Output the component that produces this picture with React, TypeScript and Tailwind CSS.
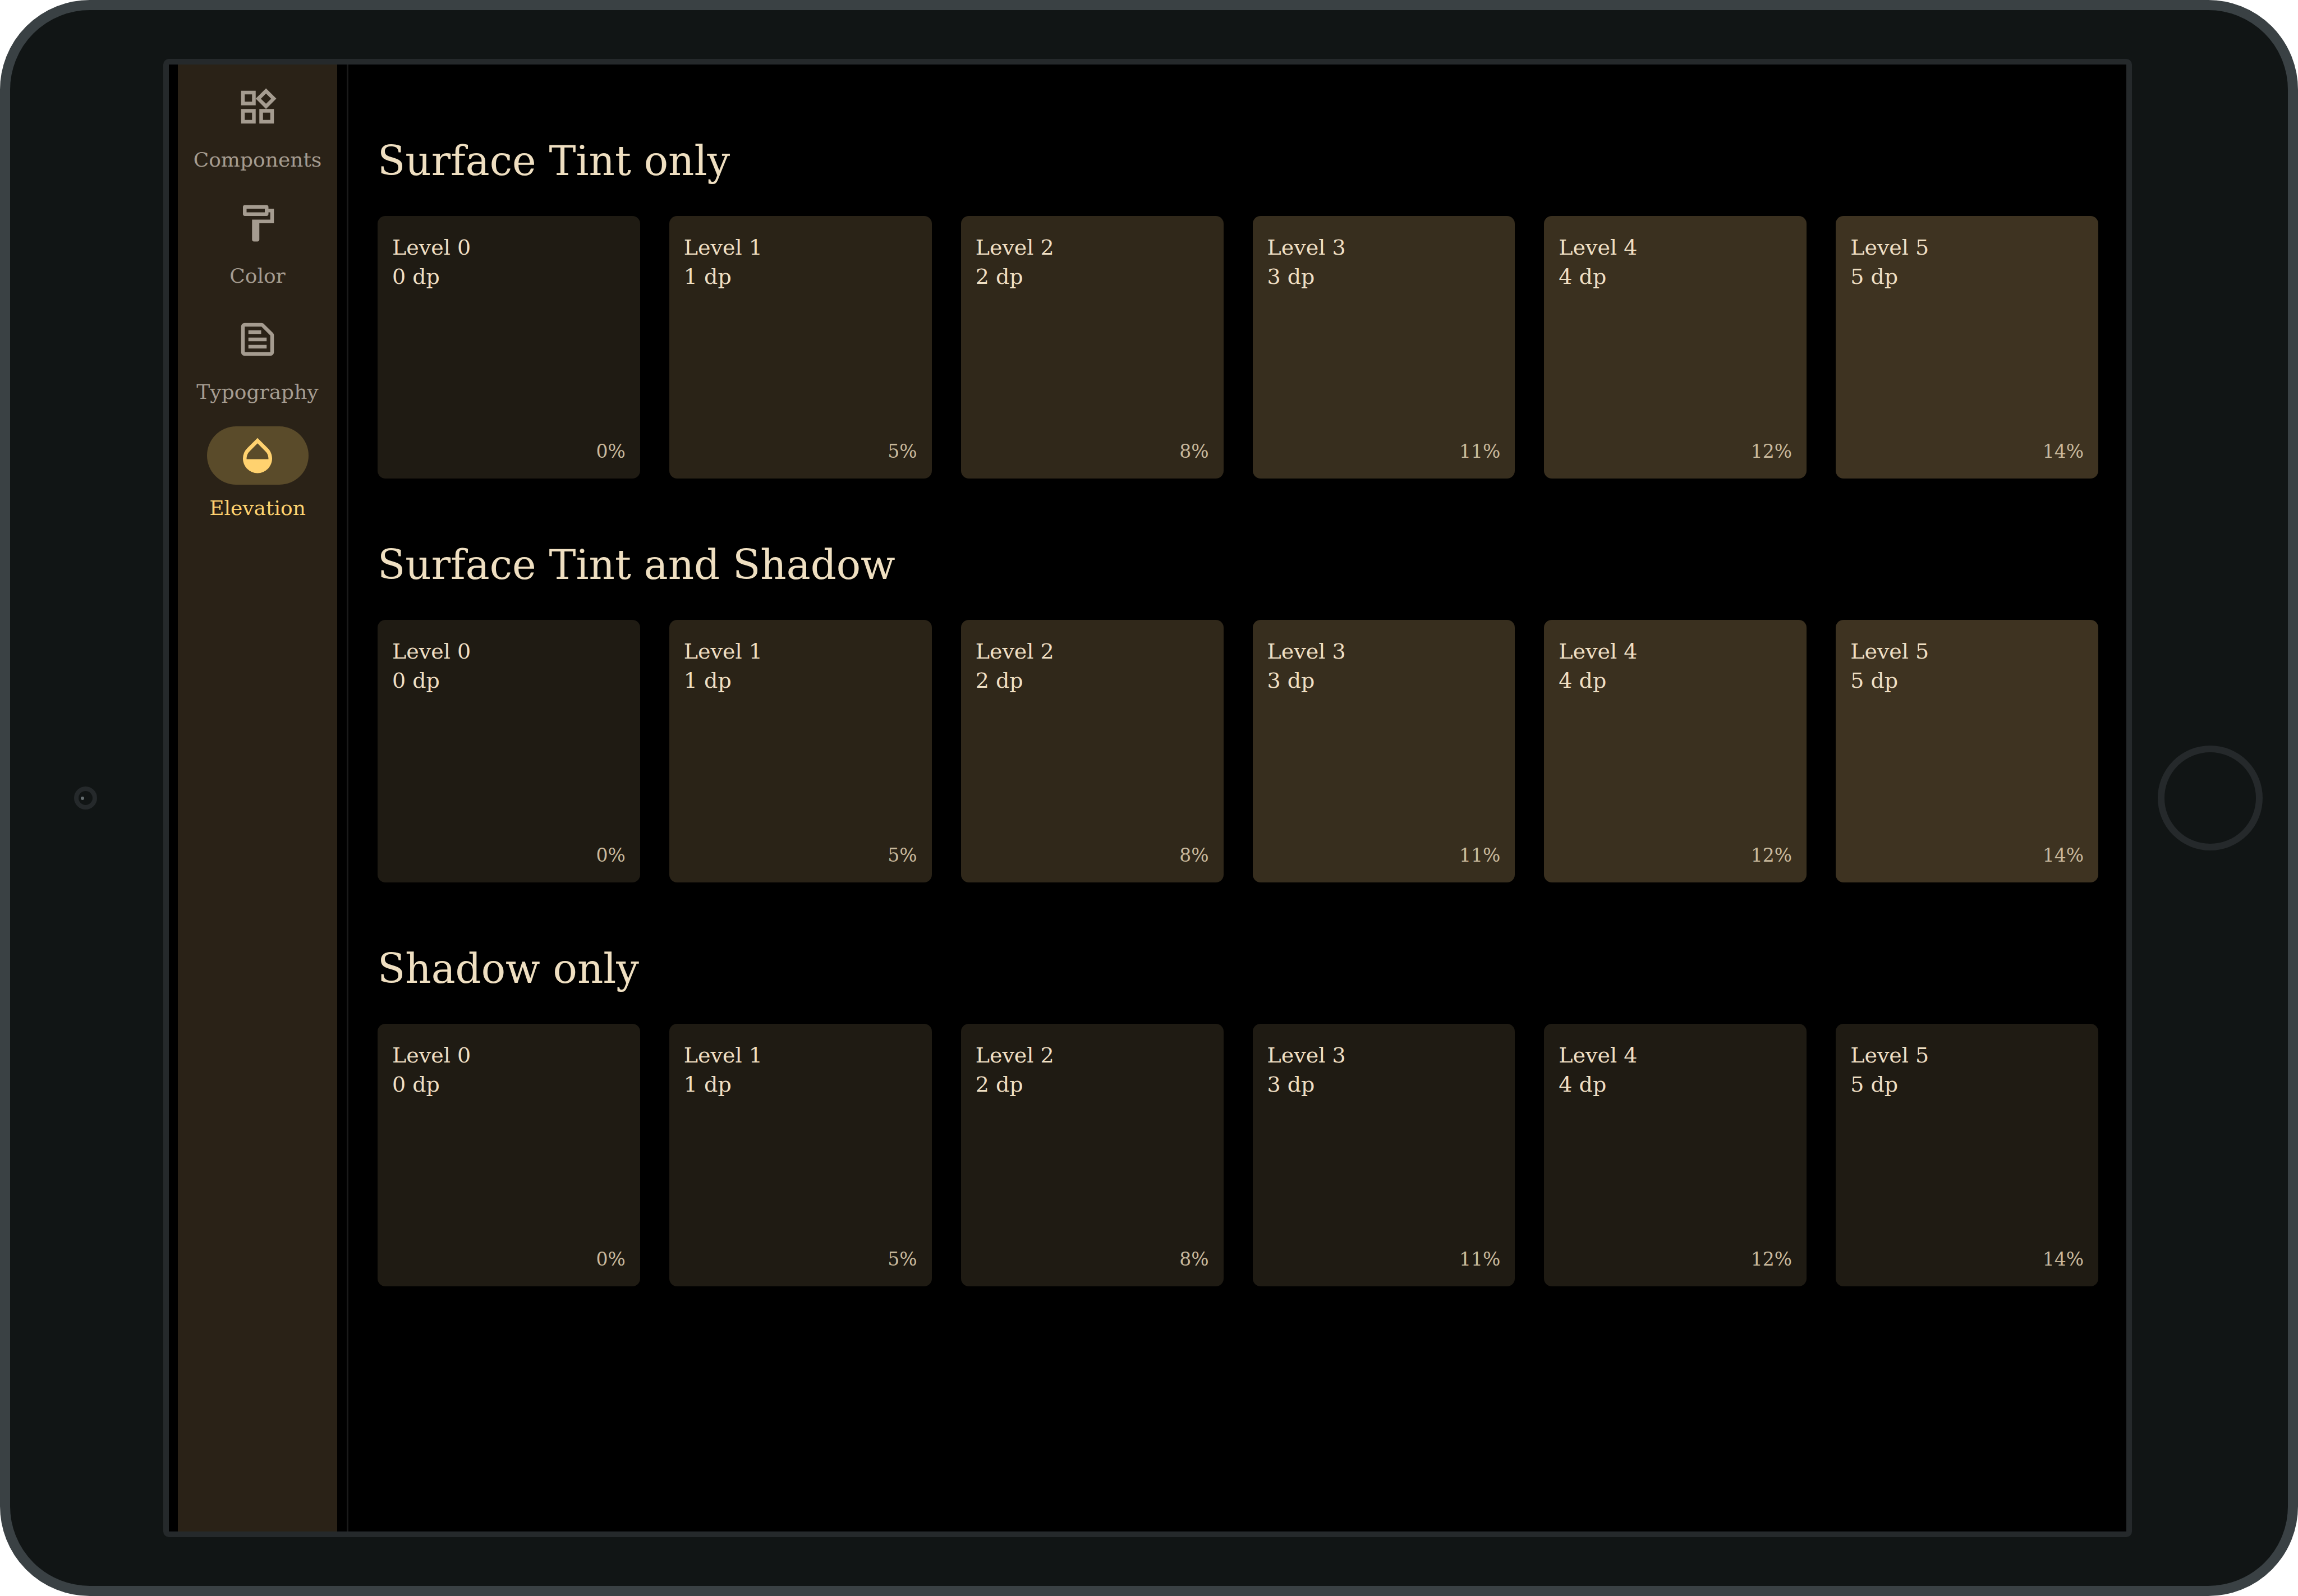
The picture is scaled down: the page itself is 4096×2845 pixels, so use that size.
import type { IconType } from "react-icons";
import {
  MdOpacity,
  MdOutlineFormatPaint,
  MdOutlineTextSnippet,
  MdOutlineWidgets,
} from "react-icons/md";

type NavItem = { label: string; icon: IconType; active?: boolean };

const navItems: NavItem[] = [
  { label: "Components", icon: MdOutlineWidgets },
  { label: "Color", icon: MdOutlineFormatPaint },
  { label: "Typography", icon: MdOutlineTextSnippet },
  { label: "Elevation", icon: MdOpacity, active: true },
];

const levels = [
  { level: 0, percent: "0%", tint: "bg-[#1f1b13]" },
  { level: 1, percent: "5%", tint: "bg-[#2a2317]" },
  { level: 2, percent: "8%", tint: "bg-[#30281a]" },
  { level: 3, percent: "11%", tint: "bg-[#372e1e]" },
  { level: 4, percent: "12%", tint: "bg-[#3a301f]" },
  { level: 5, percent: "14%", tint: "bg-[#3e3321]" },
];

const sections = [
  { title: "Surface Tint only", tinted: true },
  { title: "Surface Tint and Shadow", tinted: true },
  { title: "Shadow only", tinted: false },
];

function NavigationRail() {
  return (
    <nav
      aria-label="Main"
      className="flex w-[284px] shrink-0 flex-col gap-[35px] bg-[#2a2217] pt-6"
    >
      {navItems.map(({ label, icon: Icon, active }) => (
        <button
          key={label}
          type="button"
          aria-current={active ? "page" : undefined}
          className={
            active
              ? "flex flex-col items-center gap-4 text-[#ffd26f]"
              : "flex flex-col items-center gap-4 text-[#a59c90]"
          }
        >
          <span
            className={
              active
                ? "flex h-[104px] w-[181px] items-center justify-center rounded-full bg-[#5a4b2a]"
                : "flex h-[104px] w-[181px] items-center justify-center rounded-full"
            }
          >
            <Icon className="size-[78px]" aria-hidden />
          </span>
          <span className="text-[36px] leading-[52px]">{label}</span>
        </button>
      ))}
    </nav>
  );
}

function ElevationSection({ title, tinted }: { title: string; tinted: boolean }) {
  return (
    <section>
      <h2 className="mb-[50px] text-[72px] leading-[96px] text-[#efdfc1]">{title}</h2>
      <div className="grid grid-cols-6 gap-[52px]">
        {levels.map(({ level, percent, tint }) => (
          <article
            key={level}
            className={`flex aspect-square flex-col justify-between rounded-[14px] px-[26px] pt-[30px] pb-[22px] leading-[52px] ${
              tinted ? tint : "bg-[#1f1b13]"
            }`}
          >
            <div className="text-[38px] text-[#efdfc3]">
              <h3>Level {level}</h3>
              <p>{level} dp</p>
            </div>
            <p className="text-right text-[33px] text-[#c9b99c]">{percent}</p>
          </article>
        ))}
      </div>
    </section>
  );
}

export default function App() {
  return (
    <div className="flex min-h-screen bg-white font-['Roboto_Slab','DejaVu_Serif',serif]">
      <div className="flex flex-1 items-stretch rounded-[160px] border-[18px] border-[#3a4144] bg-[#111515] py-[87px]">
        <div className="flex w-[273px] shrink-0 items-center justify-center pr-1">
          <div className="flex size-[41px] items-center rounded-full border-8 border-[#25292b] pl-1">
            <div className="size-[6px] rounded-full bg-[#666e71]" />
          </div>
        </div>

        <div className="flex min-w-0 flex-1 rounded-[10px] border-[10px] border-[#25292b]">
          <div className="flex min-w-0 flex-1 bg-black pl-4">
            <NavigationRail />
            <main className="ml-[17px] flex min-w-0 flex-1 flex-col gap-[106px] border-l-[3px] border-[#1a1a1a] pt-[124px] pr-[50px] pl-[52px]">
              {sections.map((section) => (
                <ElevationSection key={section.title} {...section} />
              ))}
            </main>
          </div>
        </div>

        <div className="flex w-[278px] shrink-0 items-center justify-center">
          <button
            type="button"
            aria-label="Home"
            className="size-[187px] rounded-full border-[12px] border-[#25292b]"
          />
        </div>
      </div>
    </div>
  );
}
